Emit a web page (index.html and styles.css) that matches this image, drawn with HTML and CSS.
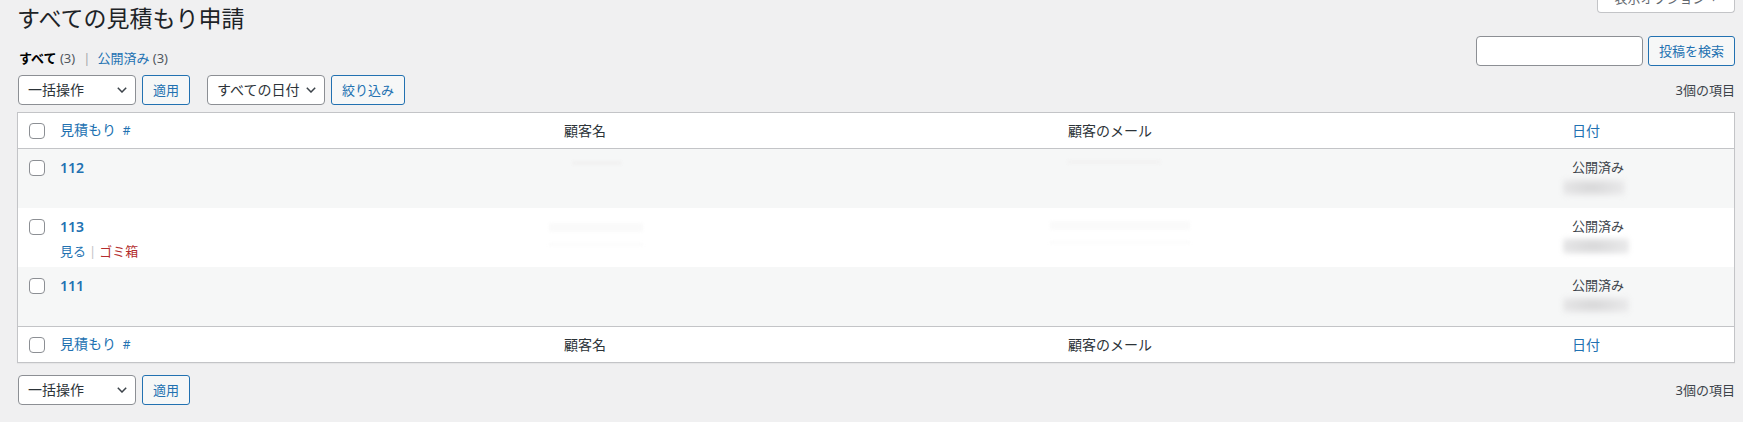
FILE: index.html
```html
<!DOCTYPE html>
<html lang="ja">
<head>
<meta charset="utf-8">
<title>すべての見積もり申請</title>
<link rel="stylesheet" href="styles.css">
</head>
<body>
<div class="wrap">
  <div class="page-head">
    <h1 class="page-title">すべての見積もり申請</h1>
    <button class="screen-options">表示オプション <span class="tri">▼</span></button>
  </div>

  <div class="filter-row">
    <ul class="subsubsub">
      <li class="current"><a class="sub-link current-link">すべて <span class="count">(3)</span></a><span class="sep">|</span></li>
      <li><a class="sub-link">公開済み <span class="count">(3)</span></a></li>
    </ul>
    <div class="search-box">
      <input class="search-input" type="search" aria-label="投稿を検索">
      <button class="btn">投稿を検索</button>
    </div>
  </div>

  <div class="tablenav tablenav-top">
    <div class="actions">
      <div class="select"><span>一括操作</span><svg class="chev" width="10" height="6" viewBox="0 0 10 6"><polyline points="0.8,0.8 5,5 9.2,0.8" fill="none" stroke="#3c434a" stroke-width="1.5"/></svg></div>
      <button class="btn">適用</button>
    </div>
    <div class="actions">
      <div class="select"><span>すべての日付</span><svg class="chev" width="10" height="6" viewBox="0 0 10 6"><polyline points="0.8,0.8 5,5 9.2,0.8" fill="none" stroke="#3c434a" stroke-width="1.5"/></svg></div>
      <button class="btn">絞り込み</button>
    </div>
    <div class="displaying-num">3個の項目</div>
  </div>

  <div class="list-table">
    <div class="row row-head">
      <div class="cell cell-check"><span class="checkbox"></span></div>
      <div class="cell"><a class="col-link">見積もり <span class="hash">#</span></a></div>
      <div class="cell col-text">顧客名</div>
      <div class="cell col-text">顧客のメール</div>
      <div class="cell"><a class="col-link">日付</a></div>
    </div>

    <div class="row row-body row-alt">
      <div class="cell cell-check"><span class="checkbox"></span></div>
      <div class="cell"><a class="row-title">112</a></div>
      <div class="cell"><div class="faint faint-name1"></div></div>
      <div class="cell"><div class="faint faint-mail1"></div></div>
      <div class="cell cell-date"><div class="status">公開済み</div><div class="date-blur"></div></div>
    </div>

    <div class="row row-body">
      <div class="cell cell-check"><span class="checkbox"></span></div>
      <div class="cell">
        <a class="row-title">113</a>
        <div class="row-actions"><a class="act-view">見る</a><span class="act-sep">|</span><a class="act-trash">ゴミ箱</a></div>
      </div>
      <div class="cell"><div class="faint faint-name2"></div><div class="faint faint-name2b"></div></div>
      <div class="cell"><div class="faint faint-mail2"></div><div class="faint faint-mail2b"></div></div>
      <div class="cell cell-date"><div class="status">公開済み</div><div class="date-blur date-blur-wide"></div></div>
    </div>

    <div class="row row-body row-alt">
      <div class="cell cell-check"><span class="checkbox"></span></div>
      <div class="cell"><a class="row-title">111</a></div>
      <div class="cell"></div>
      <div class="cell"></div>
      <div class="cell cell-date"><div class="status">公開済み</div><div class="date-blur date-blur-wide"></div></div>
    </div>

    <div class="row row-foot">
      <div class="cell cell-check"><span class="checkbox"></span></div>
      <div class="cell"><a class="col-link">見積もり <span class="hash">#</span></a></div>
      <div class="cell col-text">顧客名</div>
      <div class="cell col-text">顧客のメール</div>
      <div class="cell"><a class="col-link">日付</a></div>
    </div>
  </div>

  <div class="tablenav tablenav-bottom">
    <div class="actions">
      <div class="select"><span>一括操作</span><svg class="chev" width="10" height="6" viewBox="0 0 10 6"><polyline points="0.8,0.8 5,5 9.2,0.8" fill="none" stroke="#3c434a" stroke-width="1.5"/></svg></div>
      <button class="btn">適用</button>
    </div>
    <div class="displaying-num">3個の項目</div>
  </div>
</div>
</body>
</html>
```

FILE: styles.css
```css
* { box-sizing: border-box; }

html, body {
  margin: 0;
  background: #f0f0f1;
}

body {
  font-family: "Noto Sans", "Noto Sans CJK JP", sans-serif;
  font-size: 13px;
  line-height: 20px;
  color: #3c434a;
}

a { text-decoration: none; cursor: pointer; }

.wrap {
  padding: 0 8px 0 17px;
}

/* header */
.page-head {
  display: flex;
  justify-content: space-between;
  align-items: flex-start;
}

.page-title {
  margin: 3px 0 0 0;
  font-size: 23px;
  line-height: 30px;
  font-weight: 400;
  color: #1d2327;
  font-family: "Noto Sans", "Noto Sans CJK JP", sans-serif;
}

.screen-options {
  margin-top: -17px;
  width: 138px;
  height: 30px;
  border: 1px solid #c3c4c7;
  border-top: none;
  border-radius: 0 0 4px 4px;
  background: #fff;
  color: #646970;
  font-family: inherit;
  font-size: 13px;
  line-height: 20px;
  padding: 0 10px;
  display: flex;
  align-items: center;
  justify-content: center;
  gap: 4px;
}
.screen-options .tri { font-size: 8px; }

/* subsubsub + search */
.filter-row {
  display: flex;
  justify-content: space-between;
  align-items: flex-start;
}

.subsubsub {
  list-style: none;
  margin: 15px 0 0 2px;
  padding: 0;
  display: flex;
  font-size: 13px;
  line-height: 20px;
}
.subsubsub li { display: flex; }
.sub-link { color: #2271b1; }
.current-link { color: #000; font-weight: 600; }
.count { color: #50575e; font-weight: 400; }
.sep { color: #a7aaad; margin: 0 7px 0 8px; }

.search-box {
  margin-top: 3px;
  display: flex;
  gap: 5px;
}
.search-input {
  width: 167px;
  height: 30px;
  border: 1px solid #8c8f94;
  border-radius: 4px;
  background: #fff;
  margin: 0;
}

/* buttons & selects */
.btn {
  height: 30px;
  padding: 0 10px;
  border: 1px solid #2271b1;
  border-radius: 3px;
  background: #f6f7f7;
  color: #2271b1;
  font-family: inherit;
  font-size: 13px;
  line-height: 28px;
  white-space: nowrap;
}

.select {
  width: 118px;
  height: 30px;
  border: 1px solid #8c8f94;
  border-radius: 4px;
  background: #fff;
  color: #2c3338;
  font-size: 14px;
  display: flex;
  align-items: center;
  justify-content: space-between;
  padding: 0 8px 0 9px;
}
.chev { display: block; }

.tablenav {
  display: flex;
  align-items: center;
  height: 30px;
  padding-left: 1px;
  gap: 17px;
}
.tablenav-top { margin-top: 7px; }
.tablenav-bottom { margin-top: 12px; }

.actions {
  display: flex;
  gap: 6px;
}

.displaying-num {
  margin-left: auto;
  color: #3c434a;
  font-size: 13px;
}

/* list table */
.list-table {
  margin-top: 7px;
  border: 1px solid #c3c4c7;
  background: #fff;
  box-shadow: 0 1px 1px rgba(0,0,0,.04);
}

.row {
  display: grid;
  grid-template-columns: 32px 1fr 1fr 1fr 172px;
}

.row-head {
  height: 36px;
  border-bottom: 1px solid #c3c4c7;
  align-items: center;
}
.row-foot {
  height: 36px;
  border-top: 1px solid #c3c4c7;
  align-items: center;
}
.row-body {
  height: 59px;
  align-items: start;
}
.row-alt { background: #f6f7f7; }

.cell {
  padding: 0 10px;
  min-width: 0;
}
.row-body .cell { padding-top: 8px; }

.cell-check { padding: 0 0 0 11px; }
.row-body .cell-check { padding-top: 11px; }
.row-head .cell-check, .row-foot .cell-check { display: flex; align-items: center; }

.checkbox {
  display: block;
  width: 16px;
  height: 16px;
  border: 1px solid #8c8f94;
  border-radius: 4px;
  background: #fff;
}

.col-link {
  color: #2271b1;
  font-size: 14px;
  line-height: 20px;
}
.hash { font-size: 12px; margin-left: 3px; }
.col-text {
  color: #2c3338;
  font-size: 14px;
  line-height: 20px;
}

.row-title {
  display: block;
  color: #2271b1;
  font-size: 14px;
  font-weight: 600;
  line-height: 21px;
}

.row-actions {
  margin-top: 4px;
  font-size: 13px;
  line-height: 20px;
  display: flex;
}
.act-view { color: #2271b1; }
.act-sep { color: #c3c4c7; margin: 0 3px 0 3px; }
.act-trash { color: #b32d2e; }

.status {
  color: #3c434a;
  font-size: 13px;
  line-height: 20px;
}

.date-blur {
  width: 62px;
  height: 17px;
  margin: 2px 0 0 -9px;
  border-radius: 3px;
  background: radial-gradient(ellipse at 45% 50%, #d6d6d7 0%, #e2e2e3 45%, #ececed 80%, #f2f2f2 100%);
  filter: blur(2.5px);
}
.date-blur-wide { width: 66px; height: 16px; }

.faint {
  height: 4px;
  border-radius: 2px;
  filter: blur(1.5px);
}
.faint-name1 { width: 50px; margin: 4px 0 0 8px; background: #f1f1f1; }
.faint-mail1 { width: 94px; margin: 3px 0 0 -1px; background: #f2f2f2; }
.faint-name2 { width: 94px; height: 9px; margin: 7px 0 0 -15px; background: #fafafa; }
.faint-name2b { width: 94px; height: 3px; margin: 11px 0 0 -15px; background: #fbfbfb; }
.faint-mail2 { width: 140px; height: 9px; margin: 5px 0 0 -18px; background: #fafafa; }
.faint-mail2b { width: 140px; height: 3px; margin: 11px 0 0 -18px; background: #fbfbfb; }
```
